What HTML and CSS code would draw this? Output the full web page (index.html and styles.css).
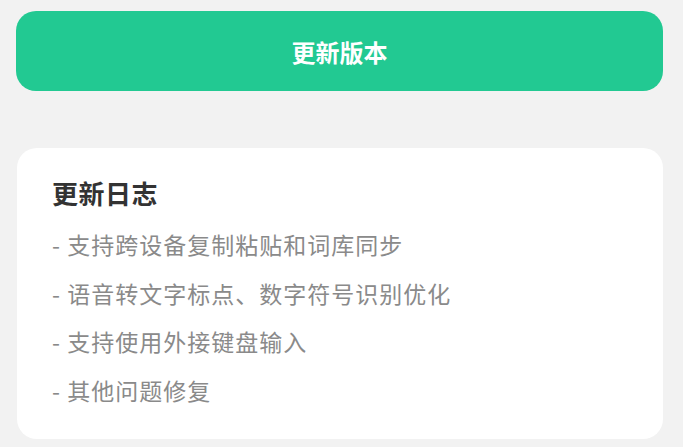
FILE: index.html
```html
<!DOCTYPE html>
<html lang="zh-CN">
<head>
<meta charset="utf-8">
<link rel="stylesheet" href="styles.css">
</head>
<body>
<div class="page">
  <button class="update-btn">更新版本</button>
  <section class="card">
    <h2 class="card-title">更新日志</h2>
    <ul class="log-list">
      <li>- 支持跨设备复制粘贴和词库同步</li>
      <li>- 语音转文字标点、数字符号识别优化</li>
      <li>- 支持使用外接键盘输入</li>
      <li>- 其他问题修复</li>
    </ul>
  </section>
</div>
</body>
</html>
```

FILE: styles.css
```css
html, body {
  margin: 0;
  padding: 0;
  background: #f2f2f2;
  font-family: "Noto Sans CJK SC", "Noto Sans", sans-serif;
}
.page {
  padding: 11px 20px 0 16px;
  display: flex;
  flex-direction: column;
}
.update-btn {
  height: 80px;
  width: 647px;
  border: none;
  border-radius: 20px;
  background: #22c992;
  color: #ffffff;
  font-family: inherit;
  font-size: 24px;
  font-weight: 700;
  padding: 0;
}
.card {
  margin-top: 57px;
  width: 646px;
  margin-left: 1px;
  height: 291px;
  box-sizing: border-box;
  background: #ffffff;
  border-radius: 20px;
  padding: 28px 0 0 35px;
}
.card-title {
  margin: 0;
  font-size: 26px;
  line-height: 34px;
  font-weight: 700;
  letter-spacing: 0.5px;
  color: #333333;
}
.log-list {
  list-style: none;
  margin: 10px 0 0;
  padding: 0;
}
.log-list li {
  font-size: 23px;
  line-height: 48.5px;
  letter-spacing: 1px;
  color: #8a8a8a;
}
```
